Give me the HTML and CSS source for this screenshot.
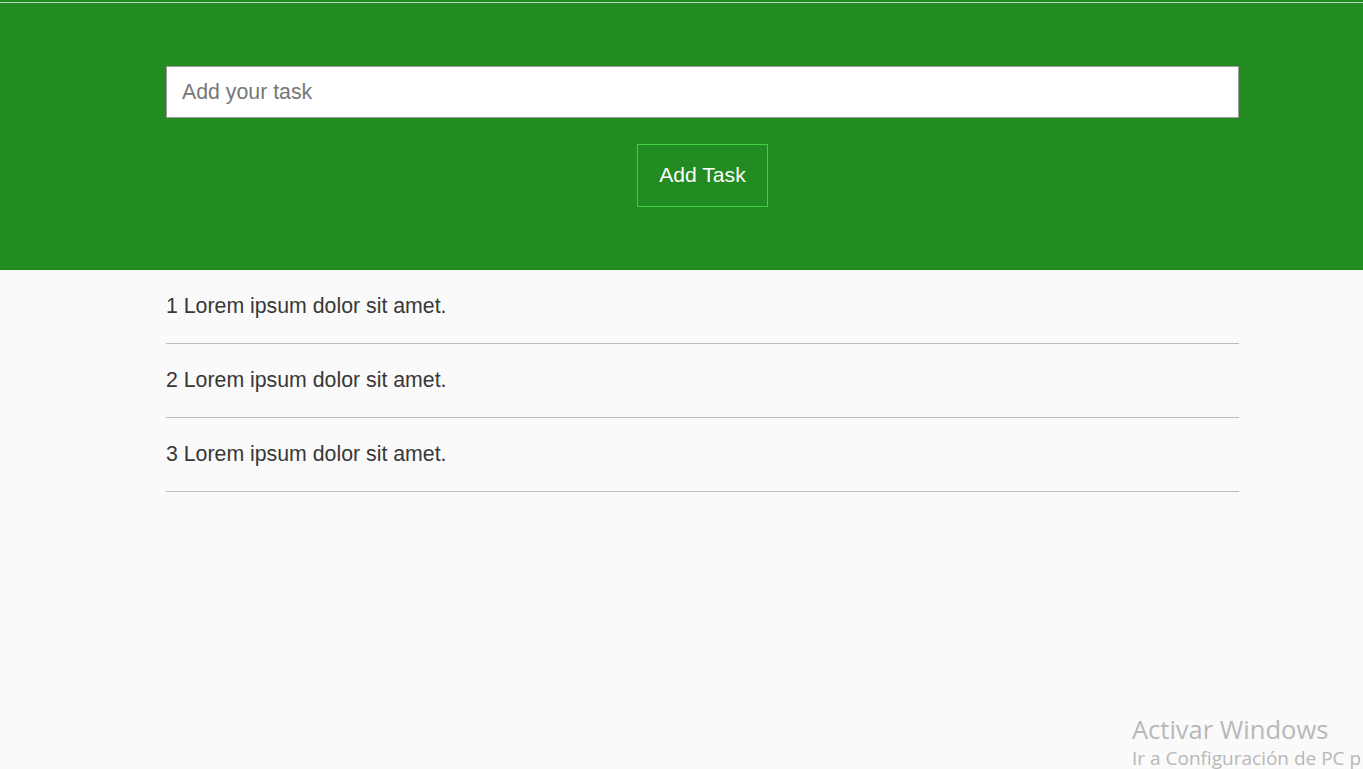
FILE: index.html
```html
<!DOCTYPE html>
<html lang="en">
<head>
<meta charset="utf-8">
<title>Tasks</title>
<link rel="stylesheet" href="styles.css">
</head>
<body>
<div class="topline"></div>
<header class="header">
  <div class="wrap">
    <input class="task-input" type="text" placeholder="Add your task">
    <div class="btn-row"><button class="add-btn">Add Task</button></div>
  </div>
</header>
<main class="wrap">
  <ul class="list">
    <li class="item">1 Lorem ipsum dolor sit amet.</li>
    <li class="item">2 Lorem ipsum dolor sit amet.</li>
    <li class="item">3 Lorem ipsum dolor sit amet.</li>
  </ul>
</main>
<div class="watermark">
  <div class="wm-title">Activar Windows</div>
  <div class="wm-sub">Ir a Configuración de PC p</div>
</div>
</body>
</html>
```
FILE: styles.css
```css
html, body {
  margin: 0;
  padding: 0;
}
body {
  background: #fafafa;
  font-family: "Liberation Sans", Arial, sans-serif;
  height: 769px;
  overflow: hidden;
  position: relative;
}
.topline {
  height: 2px;
  background: #228b22;
  border-bottom: 1px solid #b9d3b9;
}
.header {
  background: #228b22;
  height: 267px;
  box-sizing: border-box;
  padding-top: 63px;
  border-bottom: 1px solid #1f8520;
}
.wrap {
  margin: 0 124px 0 166px;
}
.task-input {
  display: block;
  width: 100%;
  box-sizing: border-box;
  height: 52px;
  border: 1px solid #9a9a9a;
  padding: 0 15px;
  font-family: "Liberation Sans", Arial, sans-serif;
  font-size: 21.3px;
  color: #333;
  background: #fff;
  outline: none;
}
.task-input::placeholder {
  color: #777;
}
.btn-row {
  display: flex;
  justify-content: center;
  margin-top: 26px;
}
.add-btn {
  width: 131px;
  height: 63px;
  background: #228b22;
  border: 1px solid #3fd13f;
  color: #fff;
  font-family: "Liberation Sans", Arial, sans-serif;
  font-size: 21.1px;
  padding: 0 0 2px;
  cursor: pointer;
}
.list {
  list-style: none;
  margin: 0;
  padding: 0;
}
.item {
  padding: 24px 0 25px;
  line-height: 24px;
  font-size: 21.3px;
  color: #383838;
  border-bottom: 1px solid #bdbdbd;
}
.watermark {
  position: absolute;
  left: 1132px;
  top: 713px;
  color: #b8b8b8;
  font-family: "Open Sans", "Noto Sans", sans-serif;
  white-space: nowrap;
}
.wm-title {
  font-size: 25.5px;
  line-height: 33px;
}
.wm-sub {
  font-size: 19px;
  line-height: 25px;
}
```
